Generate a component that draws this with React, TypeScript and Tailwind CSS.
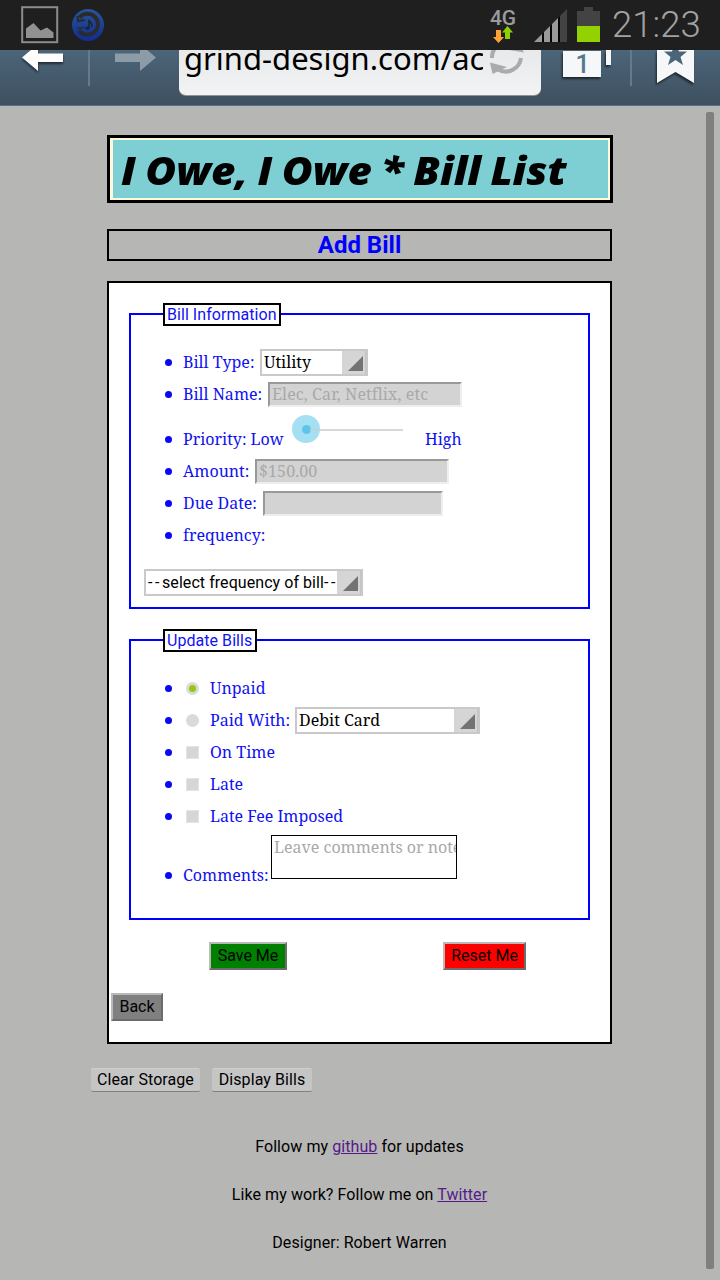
import type { ReactNode } from 'react';

function Picture() {
  return (
    <svg width="38" height="38" viewBox="0 0 38 38" fill="none">
      <rect x="1.2" y="1.2" width="35" height="35" stroke="#8c8c8c" strokeWidth="2" />
      <path d="M5 32V22.500L12.500 17L19.500 24.500L26 21.500L32.500 26.500V32Z" fill="#919191" />
    </svg>
  );
}

function MusicSync() {
  return (
    <svg width="34" height="34" viewBox="0 0 34 34" fill="none">
      <defs>
        <linearGradient id="ring" x1="0" y1="0" x2="0" y2="1">
          <stop offset="0" stopColor="#2a5594" />
          <stop offset="1" stopColor="#102c95" />
        </linearGradient>
      </defs>
      <circle cx="17" cy="17" r="16" fill="url(#ring)" />
      <path d="M8.500 9.500A10.500 10.500 0 1 1 8 22.500" stroke="#292b2e" strokeWidth="4" />
      <path d="M6.500 8L7 13L14 12" stroke="#292b2e" strokeWidth="2" />
      <path d="M6 20.500L13 19.500" stroke="#292b2e" strokeWidth="1.500" />
      <path d="M18 11.500V20M18 11.500C18.500 14.500 22.500 14.500 20.500 19" stroke="#20242b" strokeWidth="1.500" />
      <ellipse cx="16.300" cy="20.300" rx="2.200" ry="1.700" fill="#20242b" />
    </svg>
  );
}

function Signal() {
  return (
    <svg width="34" height="34" viewBox="0 0 34 34">
      <path d="M0 33L33 0V33Z" fill="#434343" />
      <path d="M0 33L26 7V33Z" fill="#050505" />
      <path d="M0 33L8 25V33ZM10 23L16 17V33H10ZM18 15L24 9V33H18Z" fill="#999" />
    </svg>
  );
}

function StatusBar() {
  return (
    <header className="flex h-[50px] bg-[#1f1f1f]">
      <div className="ml-[21px] mt-[6px]"><Picture /></div>
      <div className="ml-[12px] mt-[8px]"><MusicSync /></div>
      <div className="ml-[384px] mt-[9px] flex w-[28px] flex-col items-center">
        <span className="font-[Roboto] text-[21px] font-medium leading-[18px] text-[#9b9b9b]">4G</span>
        <svg className="-mt-px" width="22" height="17" viewBox="0 0 22 17">
          <path d="M4 4H9V11H12L6.500 17L1 11H4Z" fill="#ffa334" />
          <path d="M15.500 0L21 6.500H18V13H13V6.500H10Z" fill="#8fd000" />
        </svg>
      </div>
      <div className="ml-[17px] mt-[9px]"><Signal /></div>
      <svg className="ml-[9px] mt-[7px]" width="23" height="35" viewBox="0 0 23 35">
        <path d="M0 4H7V0H16V4H23V19H0Z" fill="#434343" />
        <rect y="19" width="23" height="16" fill="#93d200" />
      </svg>
      <span className="ml-[12px] mt-[3px] whitespace-nowrap font-[Roboto] text-[36.5px] font-light leading-[44px] text-[#a2a2a2]">21:23</span>
    </header>
  );
}

function Toolbar() {
  return (
    <nav className="flex h-[56px] overflow-hidden border-b border-[#557489] bg-linear-to-b from-[#4c6579] to-[#3e5060]">
      <svg className="ml-[20px]" width="48" height="28" viewBox="0 0 48 28">
        <g className="drop-shadow-[0_2px_1px_rgba(0,0,0,0.55)]">
          <path d="M2 7.500L18 -6V3.500H43V12H18V21Z" fill="#fff" />
        </g>
      </svg>
      <div className="ml-[20px] h-[36px] w-[2px] bg-[#657b8b]" />
      <svg className="ml-[23px]" width="48" height="28" viewBox="0 0 48 28">
        <path d="M43 7.500L27 -6V3.500H2V12H27V21Z" fill="#8d9ba7" />
      </svg>
      <div className="ml-[18px] flex h-[46px] w-[362px] overflow-hidden rounded-b-[7px] border-b border-[#95918e] bg-linear-to-b from-[#e8e9eb] to-[#f2f3f4]">
        <span className="ml-[5px] -mt-[14px] w-[299px] overflow-hidden whitespace-nowrap font-['Noto_Sans'] text-[31px] leading-[44px] text-black">grind-design.com/ac</span>
        <svg className="ml-[4px]" width="38" height="28" viewBox="0 0 38 28" fill="none">
          <path d="M5 8A15 15 0 0 1 10 -4M34 8A15.500 15.500 0 0 1 11 19.500" stroke="#aaabac" strokeWidth="4" />
          <path d="M22 0L37 2.500L33 -5Z" fill="#aaabac" />
          <path d="M3 12.500L20 17L5.500 24Z" fill="#aaabac" />
        </svg>
      </div>
      <svg className="ml-[18px]" width="54" height="32" viewBox="0 0 54 32">
        <g className="drop-shadow-[-1px_2px_1px_rgba(0,0,0,0.6)]">
          <path d="M4 1H42V27H4ZM47 0H52V15H47Z" fill="#f5f7f8" />
        </g>
        <text x="23.500" y="23" textAnchor="middle" className="font-[Roboto] text-[25px] font-medium" fill="#567990">1</text>
      </svg>
      <div className="ml-[17px] h-[36px] w-[2px] bg-[#657b8b]" />
      <svg className="ml-[22px]" width="46" height="40" viewBox="0 0 46 40">
        <g className="drop-shadow-[-1px_2px_1px_rgba(0,0,0,0.6)]">
          <path d="M3 0H40V33L21.500 22L3 33Z" fill="#f5f7f8" />
        </g>
        <path d="M21.500 -8L25 1.500H33L26.500 7L29 15L21.500 10L14 15L16.500 7L10 1.500H18Z" fill="#4a657a" />
      </svg>
    </nav>
  );
}

function Legend({ children, width }: { children: string; width: string }) {
  return (
    <div className={`-mt-[12px] ml-[32px] h-[23px] whitespace-nowrap border-2 border-black bg-white pl-[2px] font-[Roboto] text-[16px] leading-[19px] tracking-[0.05px] text-[#1111f5] ${width}`}>
      {children}
    </div>
  );
}

function Row({ children, height = 'h-8' }: { children: ReactNode; height?: string }) {
  return (
    <li className={`flex items-end pl-[34px] ${height}`}>
      <div className="flex h-8 items-center">
        <span className="mr-[11px] mt-px size-[7px] rounded-full bg-[#0808f8]" />
      </div>
      {children}
    </li>
  );
}

const serif = "font-['Noto_Serif','Droid_Serif','DejaVu_Serif_Condensed','DejaVu_Serif',serif] text-[16px]";

function Label({ children, className }: { children: string; className?: string }) {
  return (
    <span className={`h-8 shrink-0 whitespace-nowrap leading-8 text-[#1111f0] ${serif} ${className ?? ''}`}>
      {children}
    </span>
  );
}

function Select({ children, className }: { children: ReactNode; className: string }) {
  return (
    <div className={`flex h-[27px] shrink-0 border-2 border-[#c9c9c9] bg-white ${className}`}>
      <span className="flex-1 overflow-hidden whitespace-nowrap pl-[2px] leading-[23px] text-black">{children}</span>
      <div className="flex w-[24px] items-end justify-end border-r border-[#c4c4c4] bg-[#d5d5d5] pb-[3px] pr-[2px]">
        <svg width="15" height="15" viewBox="0 0 15 15"><path d="M0 15L15 0V15Z" fill="#737373" /></svg>
      </div>
    </div>
  );
}

function Input({ children, className }: { children?: string; className: string }) {
  return (
    <div className={`mb-[3px] h-[25px] shrink-0 whitespace-nowrap border-2 border-b-[#eee] border-l-[#999] border-r-[#eee] border-t-[#999] bg-[#d3d3d3] pl-[2px] leading-[21px] tracking-[0.1px] text-[#a9a9a9] ${serif} ${className}`}>
      {children}
    </div>
  );
}

function Radio({ on }: { on?: boolean }) {
  return (
    <span className="mb-[9px] ml-[3px] mr-[11px] flex size-[13px] items-center justify-center rounded-full bg-[#dadada]">
      {on && <span className="size-[7px] rounded-full bg-[#96c80c]" />}
    </span>
  );
}

function Check() {
  return <span className="mb-[9px] ml-[3px] mr-[11px] size-[13px] border border-[#e4e4e4] bg-[#d6d6d6]" />;
}

const outset = 'h-[28px] border-2 border-b-[#6c6c6c] border-l-[#b9b9b9] border-r-[#6c6c6c] border-t-[#b9b9b9] text-center leading-[24px] text-black whitespace-nowrap';
const flat = 'h-[24px] rounded-[2px] border-b border-b-[#818181] border-t border-t-[#cfcfcf] bg-[#c5c5c5] text-center leading-[22px] tracking-[0.08px] text-black whitespace-nowrap';

export default function App() {
  return (
    <div className="h-[1280px] w-[720px] overflow-hidden bg-[#b6b6b4] font-[Roboto] text-[16px] text-black">
      <StatusBar />
      <Toolbar />
      <main className="flex h-[1174px]">
        <div className="w-[706px] shrink-0 pt-[29px]">
          <div className="ml-[107px] h-[68px] w-[506px] border-3 border-black bg-[#fff8dc] p-[2px] pl-[3px]">
            <h1 className="h-full w-[495px] whitespace-nowrap bg-[#7ecfd3] pl-[8px] font-['Open_Sans'] text-[39px] font-extrabold italic leading-[59px] [word-spacing:-1.5px]">
              <span className="inline-block origin-left scale-x-[1.08]">I Owe, I Owe * Bill List</span>
            </h1>
          </div>
          <h2 className="ml-[107px] mt-[26px] h-[32px] w-[505px] border-2 border-black text-center text-[24px] font-bold leading-[28px] text-[#0000ff]">Add Bill</h2>

          <form className="ml-[107px] mt-[20px] h-[763px] w-[505px] border-2 border-black bg-white pt-[30px]">
            <section className="ml-[20px] h-[296px] w-[461px] border-2 border-[#0000ff]">
              <Legend width="w-[118px]">Bill Information</Legend>
              <ul className="mt-[20px]">
                <Row>
                  <Label className="w-[77px]">Bill Type:</Label>
                  <Select className={`mb-[2px] w-[108px] ${serif}`}>Utility</Select>
                </Row>
                <Row>
                  <Label className="w-[85px]">Bill Name:</Label>
                  <Input className="w-[194px]">Elec, Car, Netflix, etc</Input>
                </Row>
                <Row height="h-[45px]">
                  <Label className="w-[109px]">Priority: Low</Label>
                  <div className="mb-[12px] flex h-[28px] w-[133px] items-center">
                    <span className="flex size-[28px] items-center justify-center rounded-full bg-[#a5dff3]">
                      <span className="size-[9px] rounded-full bg-[#5ec5ea]" />
                    </span>
                    <span className="-ml-[10px] mt-[2px] h-[2px] w-[93px] bg-[#c8d0d3]/80" />
                  </div>
                  <Label>High</Label>
                </Row>
                <Row>
                  <Label className="w-[72px]">Amount:</Label>
                  <Input className="w-[194px]">$150.00</Input>
                </Row>
                <Row>
                  <Label className="w-[80px]">Due Date:</Label>
                  <Input className="w-[180px]" />
                </Row>
                <Row><Label>frequency:</Label></Row>
              </ul>
              <Select className="ml-[13px] mt-[18px] w-[219px]">
                <span className="tracking-[2.6px]">--</span>
                <span className="tracking-[0.06px]">select frequency of bill</span>
                <span className="tracking-[2.6px]">--</span>
              </Select>
            </section>

            <section className="ml-[20px] mt-[30px] h-[281px] w-[461px] border-2 border-[#0000ff]">
              <Legend width="w-[94px]">Update Bills</Legend>
              <ul className="mt-[20px]">
                <Row><Radio on /><Label>Unpaid</Label></Row>
                <Row>
                  <Radio />
                  <Label className="w-[85px]">Paid With:</Label>
                  <Select className={`mb-[2px] w-[185px] ${serif}`}>Debit Card</Select>
                </Row>
                <Row><Check /><Label>On Time</Label></Row>
                <Row><Check /><Label>Late</Label></Row>
                <Row><Check /><Label>Late Fee Imposed</Label></Row>
                <Row height="h-[59px]">
                  <Label className="w-[88px]">Comments:</Label>
                  <div className={`mb-[12px] h-[44px] w-[186px] overflow-hidden whitespace-nowrap border border-black bg-white pl-[2px] leading-[23px] text-[#a9a9a9] ${serif}`}>
                    Leave comments or notes
                  </div>
                </Row>
              </ul>
            </section>

            <div className="mt-[22px] flex">
              <div className={`ml-[100px] w-[78px] bg-[#008000] ${outset}`}>Save Me</div>
              <div className={`ml-[156px] w-[83px] bg-[#ff0000] ${outset}`}>Reset Me</div>
            </div>
            <div className={`ml-[2px] mt-[23px] w-[52px] bg-[#808080] ${outset}`}>Back</div>
          </form>

          <div className="ml-[91px] mt-[24px] flex gap-3">
            <div className={`w-[109px] ${flat}`}>Clear Storage</div>
            <div className={`w-[100px] ${flat}`}>Display Bills</div>
          </div>

          <footer className="ml-[107px] mt-[43px] w-[505px] text-center leading-[24px] tracking-[0.07px]">
            <p>Follow my <a className="text-[#551a8b] underline">github</a> for updates</p>
            <p className="mt-6">Like my work? Follow me on <a className="text-[#551a8b] underline">Twitter</a></p>
            <p className="mt-6">Designer: Robert Warren</p>
          </footer>
        </div>
        <div className="mt-[6px] h-[1157px] w-[8px] rounded-[2px] bg-[#7f7f7e]" />
      </main>
    </div>
  );
}
